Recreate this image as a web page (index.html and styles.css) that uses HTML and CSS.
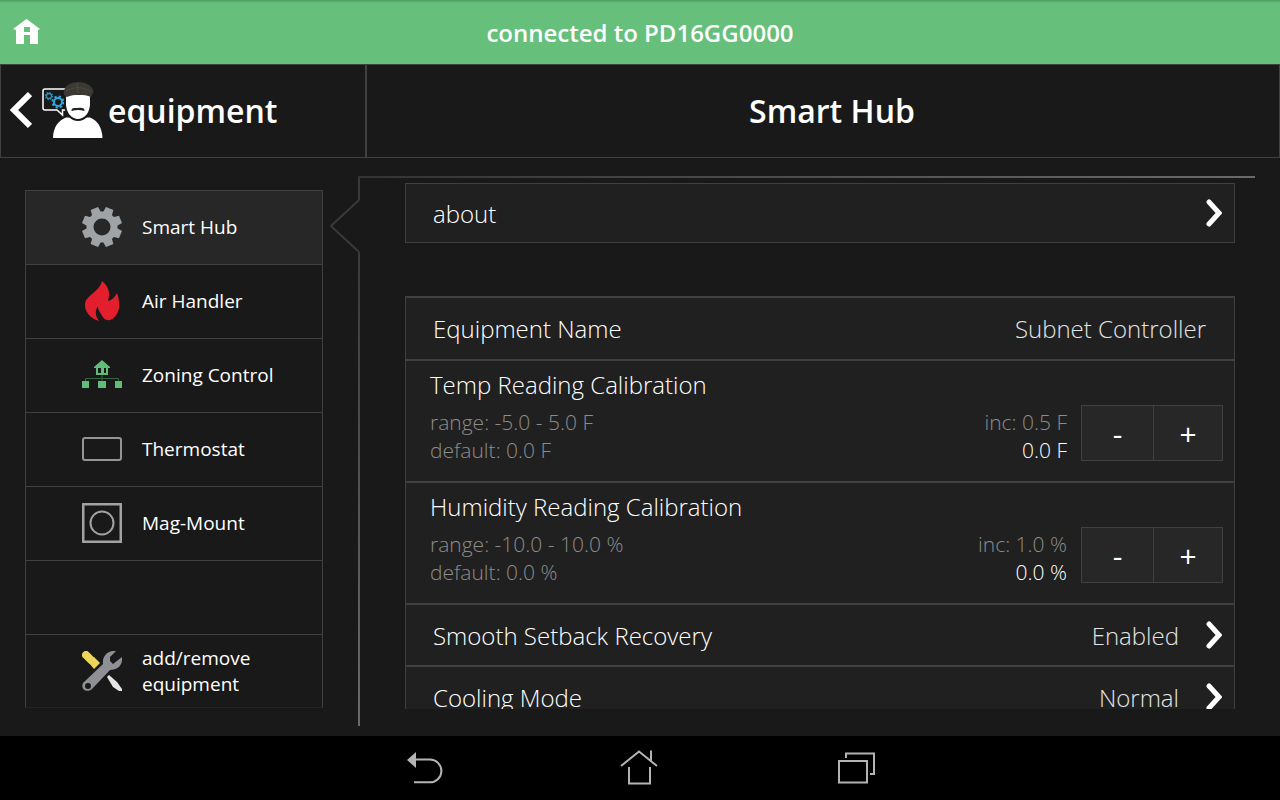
FILE: index.html
```html
<!DOCTYPE html>
<html lang="en">
<head>
  <meta charset="UTF-8">
  <title>Smart Hub</title>

  <link rel="stylesheet" href="styles.css">
</head>
<body>
  <div class="status">
    <a class="status-home" href="#" aria-label="home">
      <svg width="28" height="28" viewBox="0 0 28 28">
        <path fill="#fff" fill-rule="evenodd" d="M0 11L13.500 1L27 11L25 12V26H17V17H11V26H3V12ZM11 9V14H17V9Z"/>
      </svg>
    </a>
    <p>connected to PD16GG0000</p>
  </div>

  <header class="top">
    <a class="back" href="#">
      <svg class="back-arrow" width="24" height="38" viewBox="0 0 24 38">
        <path fill="none" stroke="#fff" stroke-width="6" d="M22 3L6 19L22 35"/>
      </svg>
      <svg width="64" height="58" viewBox="0 0 64 58">
        <path fill="#191919" stroke="#fff" stroke-width="1.500" d="M28 8H5Q3 8 3 10V27Q3 29 5 29H17L22.500 34V29H30"/>
        <circle cx="9" cy="15" r="2.500" fill="none" stroke="#2d8fb5" stroke-width="1.300"/>
        <circle cx="9" cy="15" r="3.500" fill="none" stroke="#2d8fb5" stroke-width="1.300" stroke-dasharray="1.400 1.350"/>
        <circle cx="18" cy="21" r="4" fill="none" stroke="#2ea8dc" stroke-width="2"/>
        <circle cx="18" cy="21" r="5.500" fill="none" stroke="#2ea8dc" stroke-width="2" stroke-dasharray="2.200 2.120"/>
        <path fill="#fff" d="M13 57C13 46 19 39 26 36.500H50C57 39 62 46 62.500 57Z"/>
        <path fill="#fff" stroke="#191919" stroke-width="2" d="M25 13H51V24C50 34 44 39 38 39S26 34 25 24Z"/>
        <path fill="#222" d="M31.500 30C31 26.500 35 27 38 27C42 26.500 45 27 44.500 30C40 28.500 36 28.500 31.500 30Z"/>
        <path fill="#3b3931" d="M24 10C25 4 32 1 38 1C46 1 53 5 53.500 11L51 16C44 13 34 13 27 16C24 15 23.500 12 24 10Z"/>
        <path fill="none" stroke="#4b4940" d="M26 10C33 6 43 5 51 11M37 2L38 12"/>
      </svg>
      <span>equipment</span>
    </a>
    <h1>Smart Hub</h1>
  </header>

  <main>
    <nav class="devices">
      <a class="active" href="#">
        <svg width="40" height="40" viewBox="0 0 40 40">
          <defs><path id="tooth" d="M15 8L16 0H24L25 8Z"/></defs>
          <g fill="#a0a3a5">
            <circle cx="20" cy="20" r="12" fill="none" stroke="#a0a3a5" stroke-width="7"/>
            <use href="#tooth" transform="rotate(22.500 20 20)"/>
            <use href="#tooth" transform="rotate(67.500 20 20)"/>
            <use href="#tooth" transform="rotate(112.500 20 20)"/>
            <use href="#tooth" transform="rotate(157.500 20 20)"/>
            <use href="#tooth" transform="rotate(202.500 20 20)"/>
            <use href="#tooth" transform="rotate(247.500 20 20)"/>
            <use href="#tooth" transform="rotate(292.500 20 20)"/>
            <use href="#tooth" transform="rotate(337.500 20 20)"/>
          </g>
        </svg>
        <span>Smart Hub</span>
      </a>
      <a href="#">
        <svg width="40" height="40" viewBox="0 0 40 40">
          <path fill="#e41f2d" d="M20 0C28 7 28 13 26 20C30 19 33 16 35 12C39 23 38 35 28 39C24 40 21 37 19 33C17 30 16 28 16 25C12 31 14 35 17 40C8 37 3 31 3 24C3 14 17 12 20 0Z"/>
        </svg>
        <span>Air Handler</span>
      </a>
      <a href="#">
        <svg width="40" height="40" viewBox="0 0 40 40">
          <g fill="#5fbd78">
            <path fill-rule="evenodd" d="M12 12L20 5L28 12V13H26V20H14V13H12ZM16 13V18H19V13ZM22 13V18H24V13Z"/>
            <path d="M0 26H7V33H0ZM16 26H24V33H16ZM33 26H40V33H33Z"/>
          </g>
          <path fill="none" stroke="#37633f" d="M3.500 26V23.500H36.500V26M20 20V26"/>
        </svg>
        <span>Zoning Control</span>
      </a>
      <a href="#">
        <svg width="40" height="40" viewBox="0 0 40 40">
          <rect x="1" y="9" width="38" height="22" rx="2" fill="none" stroke="#949494" stroke-width="2"/>
        </svg>
        <span>Thermostat</span>
      </a>
      <a href="#">
        <svg width="40" height="40" viewBox="0 0 40 40" fill="none" stroke="#a2a2a2" stroke-width="2">
          <rect x="1" y="1" width="38" height="38" rx="1" stroke-width="3"/>
          <circle cx="20" cy="20" r="11.500"/>
        </svg>
        <span>Mag-Mount</span>
      </a>
      <div class="empty"></div>
      <a href="#">
        <svg width="40" height="40" viewBox="0 0 40 40">
          <path stroke="#ecd75a" stroke-width="8" stroke-linecap="round" d="M4 4L9 9"/>
          <path fill="#ecd75a" d="M7 12L12 6L18 12L12 18Z"/>
          <path fill="#e6e6e6" d="M25 26L27 24L35 31L40 38V40H37L31 36Z"/>
          <path fill="#8e9095" fill-rule="evenodd" d="M34 0L28 6V10L31 13L40 6C41 14 36 19 28 19L10 38C6 42 -2 39 1 32L21 13C20 5 26 -1 34 0ZM6 32A3 3 0 1 0 6 38A3 3 0 1 0 6 32Z"/>
        </svg>
        <span>add/remove equipment</span>
      </a>
    </nav>

    <section class="detail">
      <div class="edge">
        <svg width="30" height="52" viewBox="0 0 30 52">
          <path fill="none" stroke="#393939" stroke-width="2" d="M29 0L1 26L29 52"/>
        </svg>
      </div>

      <div class="scroll">
        <button class="row about">
          <span>about</span>
          <svg width="16" height="28" viewBox="0 0 16 28"><path d="M3 3L13 14L3 25"/></svg>
        </button>

        <div class="card">
          <div class="row name">
            <span>Equipment Name</span>
            <span class="value">Subnet Controller</span>
          </div>

          <div class="calibration">
            <h2>Temp Reading Calibration</h2>
            <div class="reading">
              <p>range: -5.0 - 5.0 F<br>default: 0.0 F</p>
              <p class="current">inc: 0.5 F<br><b>0.0 F</b></p>
              <div class="stepper">
                <button aria-label="lower temperature">-</button>
                <button aria-label="raise temperature">+</button>
              </div>
            </div>
          </div>

          <div class="calibration">
            <h2>Humidity Reading Calibration</h2>
            <div class="reading">
              <p>range: -10.0 - 10.0 %<br>default: 0.0 %</p>
              <p class="current">inc: 1.0 %<br><b>0.0 %</b></p>
              <div class="stepper">
                <button aria-label="lower humidity">-</button>
                <button aria-label="raise humidity">+</button>
              </div>
            </div>
          </div>

          <button class="row">
            <span>Smooth Setback Recovery</span>
            <span class="value">Enabled</span>
            <svg width="16" height="28" viewBox="0 0 16 28"><path d="M3 3L13 14L3 25"/></svg>
          </button>
          <button class="row">
            <span>Cooling Mode</span>
            <span class="value">Normal</span>
            <svg width="16" height="28" viewBox="0 0 16 28"><path d="M3 3L13 14L3 25"/></svg>
          </button>
        </div>
      </div>
    </section>
  </main>

  <footer class="system">
    <button aria-label="back">
      <svg width="40" height="40" viewBox="0 0 40 40">
        <path class="solid" d="M3 12L12 4V20Z"/>
        <path d="M12 11.500H26A11.400 11.400 0 0 1 26 34.300H10"/>
      </svg>
    </button>
    <button aria-label="home screen">
      <svg width="40" height="40" viewBox="0 0 40 40">
        <path d="M1 18L19 3.500L37 18M31 2.500V12.500M9 19V35.500H30V19"/>
      </svg>
    </button>
    <button aria-label="recent apps">
      <svg width="40" height="40" viewBox="0 0 40 40">
        <path d="M3 13H31V34.500H3ZM10 10V5.500H38V26H34"/>
      </svg>
    </button>
  </footer>
</body>
</html>
```
FILE: styles.css
```css
* {
  box-sizing: border-box;
}

body {
  margin: 0;
  height: 100vh;
  display: flex;
  flex-direction: column;
  background: #191919;
  color: #fff;
  font-family: "Open Sans", sans-serif;
}
h1, h2, p {
  margin: 0;
}
a {
  color: inherit;
  text-decoration: none;
}
button {
  margin: 0;
  border: 0;
  padding: 0;
  background: none;
  color: inherit;
  font-family: inherit;
}
svg {
  display: block;
  flex: none;
}

/* green connection bar */
.status {
  display: grid;
  grid-template-columns: 40px 1fr 40px;
  align-items: center;
  height: 64px;
  background: linear-gradient(#4f9861, #66c07c 3px);
  text-align: center;
  font-size: 24px;
  font-weight: 600;
}
.status-home {
  padding-left: 13px;
}

.top {
  display: grid;
  grid-template-columns: 366px 1fr;
  height: 94px;
  border: 1px solid #404040;
}
.back {
  display: flex;
  align-items: center;
  padding: 0 0 2px 7px;
  border-right: 2px solid #404040;
  font-size: 32px;
  font-weight: 600;
}
.back-arrow {
  margin-right: 8px;
}
.back span {
  margin-left: 4px;
}
.top h1 {
  align-self: center;
  padding: 0 0 2px 18px;
  text-align: center;
  font-size: 32px;
  font-weight: 600;
}

main {
  flex: 1;
  min-height: 0;
  display: flex;
  padding: 18px 25px 10px;
}

/* left menu */
.devices {
  flex: none;
  width: 298px;
  margin: 14px 7px 0 0;
}
.devices a, .empty {
  display: flex;
  align-items: center;
  gap: 20px;
  height: 74px;
  padding: 0 48px 2px 56px;
  border: 1px solid #404040;
  border-bottom: 0;
  font-size: 19px;
  line-height: 26px;
}
.devices a:last-child {
  padding-bottom: 0;
  border-bottom: 1px solid #242424;
}
.devices .active {
  background: #272727;
}

/* right panel */
.detail {
  position: relative;
  flex: 1;
  min-width: 0;
  display: flex;
}
.detail::before {
  content: "";
  position: absolute;
  top: 0;
  left: 28px;
  right: 0;
  height: 2px;
  background: linear-gradient(to right, #333, #6a6a6a);
}
.edge {
  display: flex;
  flex-direction: column;
  align-items: flex-end;
  width: 30px;
}
.edge::before, .edge::after {
  content: "";
  width: 2px;
  height: 24px;
  background: #393939;
}
.edge::after {
  flex: 1;
  background: linear-gradient(#3a3a3a, #6a6a6a);
}
.scroll {
  flex: 1;
  min-width: 0;
  margin: 7px 20px 17px 45px;
  overflow-y: auto;
  scrollbar-width: none;
}
.row {
  display: flex;
  align-items: center;
  width: 100%;
  height: 62px;
  padding: 0 12px 0 27px;
  border-top: 2px solid #404040;
  text-align: left;
  font-size: 24px;
  font-weight: 300;
}
.about {
  height: 60px;
  margin-bottom: 53px;
  border: 1px solid #404040;
  background: #202020;
}
.row span:first-child {
  flex: 1;
}
.row path {
  fill: none;
  stroke: #fff;
  stroke-width: 5;
  stroke-linecap: round;
}
.value {
  color: #e4e4e4;
}
.row .value + svg {
  margin-left: 27px;
}
.name {
  height: 63px;
  padding-right: 28px;
}
.card {
  border: 1px solid #404040;
  border-top: 0;
  background: #202020;
}

.calibration {
  height: 122px;
  padding: 8px 11px 0 24px;
  border-top: 2px solid #404040;
}
.calibration h2 {
  font-size: 24px;
  line-height: 32px;
  font-weight: 300;
}
.reading {
  display: flex;
  align-items: flex-start;
  margin-top: 4px;
  color: #8c8c8c;
  font-size: 21px;
  line-height: 28px;
  font-weight: 300;
}
.reading p {
  margin-top: 3px;
}
.reading .current {
  margin-left: auto;
  text-align: right;
}
.current b {
  color: #fff;
  font-weight: 300;
}
.stepper {
  display: grid;
  grid-template-columns: 71px 1fr;
  width: 142px;
  height: 56px;
  margin-left: 14px;
  border: 1px solid #404040;
  background: #272727;
}
.stepper button {
  color: #fff;
  font-size: 30px;
  font-weight: 400;
}
.stepper button + button {
  border-left: 1px solid #404040;
}

/* android buttons */
.system {
  display: flex;
  justify-content: center;
  align-items: center;
  gap: 176px;
  height: 64px;
  background: #000;
}
.system path {
  fill: none;
  stroke: #b4b4b4;
  stroke-width: 2;
}
.system .solid {
  fill: #b4b4b4;
  stroke: none;
}
```
